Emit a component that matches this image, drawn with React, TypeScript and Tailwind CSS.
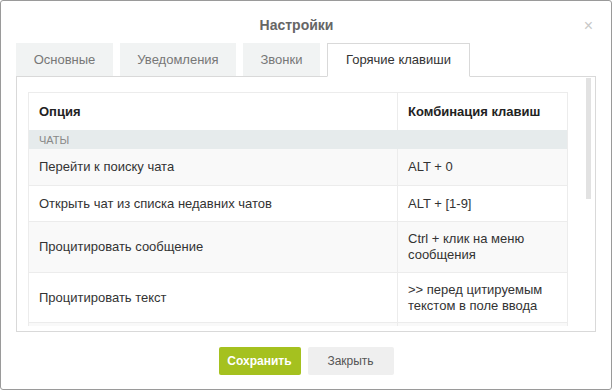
import React from 'react';

const tabs = [
  { label: 'Основные', w: 'w-[97px]' },
  { label: 'Уведомления', w: 'w-[116px]' },
  { label: 'Звонки', w: 'w-[77px]' },
  { label: 'Горячие клавиши', w: 'w-[143px]', active: true },
];

const rows: { option: string; keys: string[]; h: string; striped: boolean }[] = [
  { option: 'Перейти к поиску чата', keys: ['ALT + 0'], h: 'h-[37px]', striped: true },
  { option: 'Открыть чат из списка недавних чатов', keys: ['ALT + [1-9]'], h: 'h-[36px]', striped: false },
  { option: 'Процитировать сообщение', keys: ['Ctrl + клик на меню', 'сообщения'], h: 'h-[51px]', striped: true },
  { option: 'Процитировать текст', keys: ['>> перед цитируемым', 'текстом в поле ввода'], h: 'h-[50px]', striped: false },
  { option: '', keys: [''], h: 'h-[40px]', striped: true },
];

const App = () => {
  return (
    <div className="w-[612px] h-[390px] bg-white border border-[#9a9a9a] rounded-[3px] flex flex-col font-['Liberation_Sans',Arial,sans-serif] text-[#333]">
      <div className="relative h-[42px] flex justify-center pt-[16px] pr-[19px]">
        <h1 className="text-[14px] leading-[16px] font-bold text-[#666]">Настройки</h1>
        <span className="absolute right-[18px] top-[17px] text-[16px] leading-[16px] text-[#c8c8c8]">×</span>
      </div>

      <div className="flex gap-[7px] px-[15px] h-[33px] relative z-10">
        {tabs.map((t) => (
          <div
            key={t.label}
            className={
              t.active
                ? `${t.w} h-[34px] flex items-center justify-center text-[13px] text-[#333] bg-white border border-[#d9d9d9] border-b-white`
                : `${t.w} h-[33px] flex items-center justify-center text-[13px] text-[#777] bg-[#f1f3f3]`
            }
          >
            {t.label}
          </div>
        ))}
      </div>

      <div className="relative mx-[15px] h-[256px] border border-[#d9d9d9]">
        <div className="h-[249px] overflow-hidden pt-[15px] pl-[11px] pr-[27px]">
          <div className="border border-[#ececec] text-[13px] leading-[16px]">
            <div className="flex h-[37px] bg-white font-bold text-[#222]">
              <div className="w-[369px] flex items-center px-[10px] border-r border-[#ececec]">Опция</div>
              <div className="flex-1 flex items-center px-[10px]">Комбинация клавиш</div>
            </div>
            <div className="h-[19px] flex items-center px-[10px] bg-[#e6ebec] text-[11px] text-[#888] uppercase">
              Чаты
            </div>
            {rows.map((r, i) => (
              <div
                key={i}
                className={`flex ${r.h} border-b border-[#ececec] ${r.striped ? 'bg-[#f9f9f9]' : 'bg-white'}`}
              >
                <div className="w-[369px] flex items-center px-[10px] border-r border-[#ececec]">{r.option}</div>
                <div className="flex-1 flex flex-col justify-center px-[10px]">
                  {r.keys.map((k, j) => (
                    <span key={j} className="block">{k}</span>
                  ))}
                </div>
              </div>
            ))}
          </div>
        </div>
        <div className="absolute right-[4px] top-[1px] w-[5px] h-[121px] bg-[#e2e2e2]" />
      </div>

      <div className="flex-1 flex items-center justify-center gap-[7px]">
        <button className="w-[82px] h-[28px] rounded-[2px] bg-[#a5c11f] text-white text-[12px] font-bold">
          Сохранить
        </button>
        <button className="w-[86px] h-[28px] rounded-[2px] bg-[#efefef] text-[#555] text-[12px]">
          Закрыть
        </button>
      </div>
    </div>
  );
};

export default App;
